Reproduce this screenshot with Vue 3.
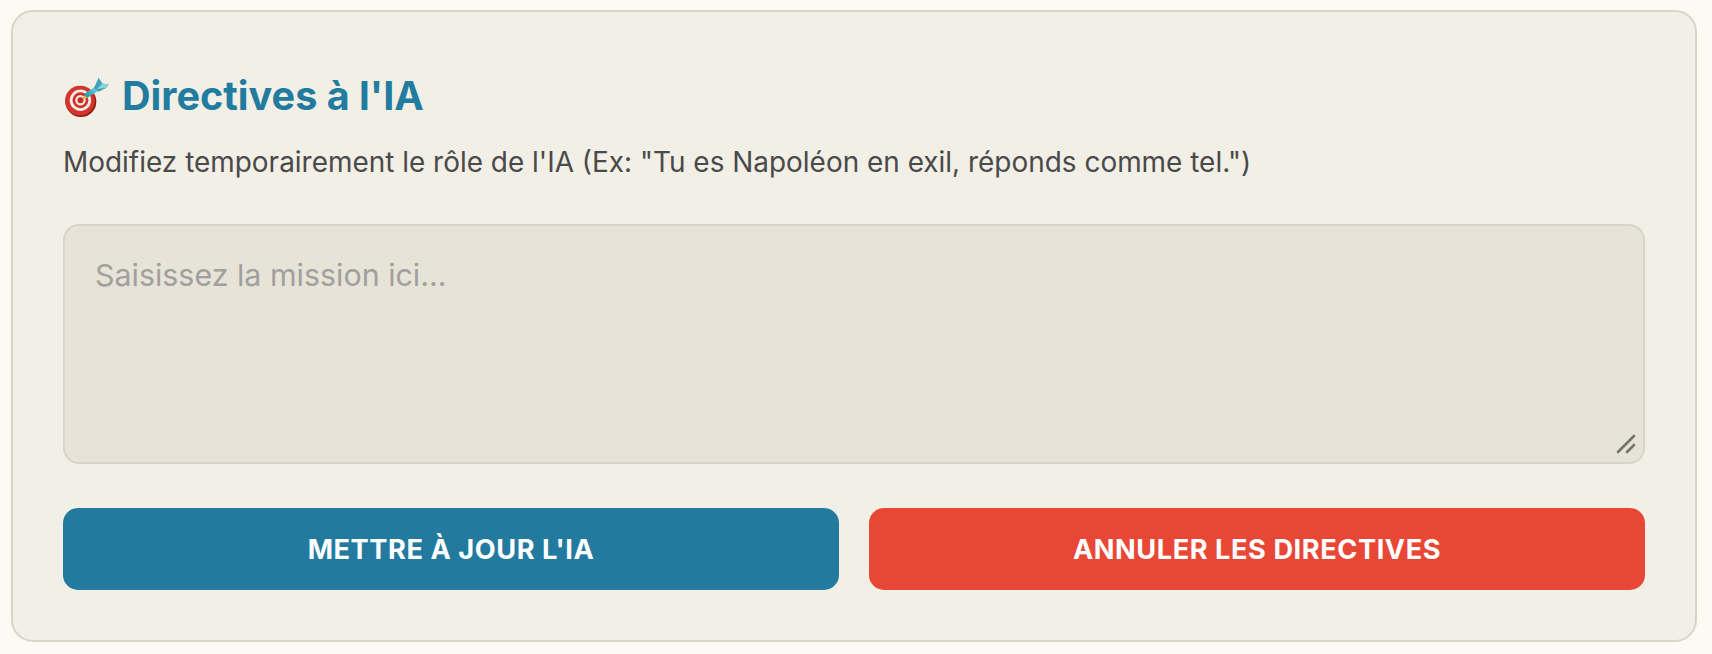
<template>
  <div class="page">
    <section class="card">
      <h2 class="title">
        <svg class="dart" viewBox="0 0 50 44" aria-hidden="true">
          <defs>
            <linearGradient id="shaft" x1="0" y1="1" x2="1" y2="0">
              <stop offset="0" stop-color="#2f9fb5" />
              <stop offset="1" stop-color="#7fd0dc" />
            </linearGradient>
          </defs>
          <!-- cible -->
          <circle cx="19" cy="27.5" r="16.5" fill="#8c1a14" />
          <circle cx="18" cy="26.5" r="16" fill="#d2352b" />
          <circle cx="18.5" cy="26" r="11.5" fill="#f3ebe4" />
          <circle cx="18.5" cy="26" r="8.5" fill="#cf3028" />
          <circle cx="18.5" cy="26" r="5.6" fill="#f3ebe4" />
          <circle cx="18.5" cy="26" r="3.2" fill="#c92b24" />
          <!-- flechette -->
          <path d="M23 23 L27 20" stroke="#e2b54a" stroke-width="3.5" stroke-linecap="round" />
          <path d="M26 20 L37 13" stroke="url(#shaft)" stroke-width="5.5" stroke-linecap="round" />
          <path d="M33 13 L38 2 L42 8 L49 9 L46 13 L38 17 Z" fill="#3ea3b6" />
          <path d="M36 14 L42 8 L49 9 L46 13 Z" fill="#86d3dd" />
        </svg>
        <span>Directives à l'IA</span>
      </h2>
      <p class="hint">Modifiez temporairement le rôle de l'IA (Ex: "Tu es Napoléon en exil, réponds comme tel.")</p>

      <div class="field">
        <textarea class="mission" placeholder="Saisissez la mission ici..."></textarea>
        <svg class="grip" viewBox="0 0 20 20" aria-hidden="true">
          <path d="M2 18 L18 2 M11 18 L18 11" stroke="#75736e" stroke-width="2.6" stroke-linecap="round" />
        </svg>
      </div>

      <div class="actions">
        <button class="btn btn-update">METTRE À JOUR L'IA</button>
        <button class="btn btn-cancel">ANNULER LES DIRECTIVES</button>
      </div>
    </section>
  </div>
</template>

<script setup>
</script>

<style>
body {
  background: #fdfaf4;
}
</style>

<style scoped>
.page {
  padding: 10px 15px 0 11px;
  font-family: Inter, "Liberation Sans", sans-serif;
}

.card {
  box-sizing: border-box;
  height: 632px;
  padding: 60px 50px 0;
  background: #f2efe6;
  border: 2px solid #d9d4c6;
  border-radius: 22px;
}

.title {
  display: flex;
  align-items: center;
  gap: 12px;
  margin: 0;
  height: 48px;
  font-size: 39.6px;
  font-weight: 700;
  color: #227c9f;
}

.dart {
  width: 47px;
  height: 41px;
  flex: none;
}

.hint {
  margin: 24px 0 0;
  font-size: 27.95px;
  line-height: 36px;
  color: #4a4a4a;
}

.field {
  position: relative;
  margin-top: 44px;
}

.mission {
  display: block;
  box-sizing: border-box;
  width: 100%;
  height: 240px;
  padding: 31px 30px 30px;
  background: #e7e3d7;
  border: 2px solid #d9d4c6;
  border-radius: 16px;
  font-family: inherit;
  font-size: 30.4px;
  resize: none;
  outline: none;
}

.mission::placeholder {
  color: #a1a09e;
}

.grip {
  position: absolute;
  right: 9px;
  bottom: 10px;
  width: 20px;
  height: 20px;
}

.actions {
  display: grid;
  grid-template-columns: 1fr 1fr;
  gap: 30px;
  margin-top: 44px;
}

.btn {
  height: 82px;
  border: none;
  border-radius: 15px;
  color: #fff;
  font-family: inherit;
  font-size: 27.2px;
  font-weight: 700;
  letter-spacing: 0.55px;
}

.btn-update {
  background: #227a9f;
}

.btn-cancel {
  background: #e94735;
}
</style>
